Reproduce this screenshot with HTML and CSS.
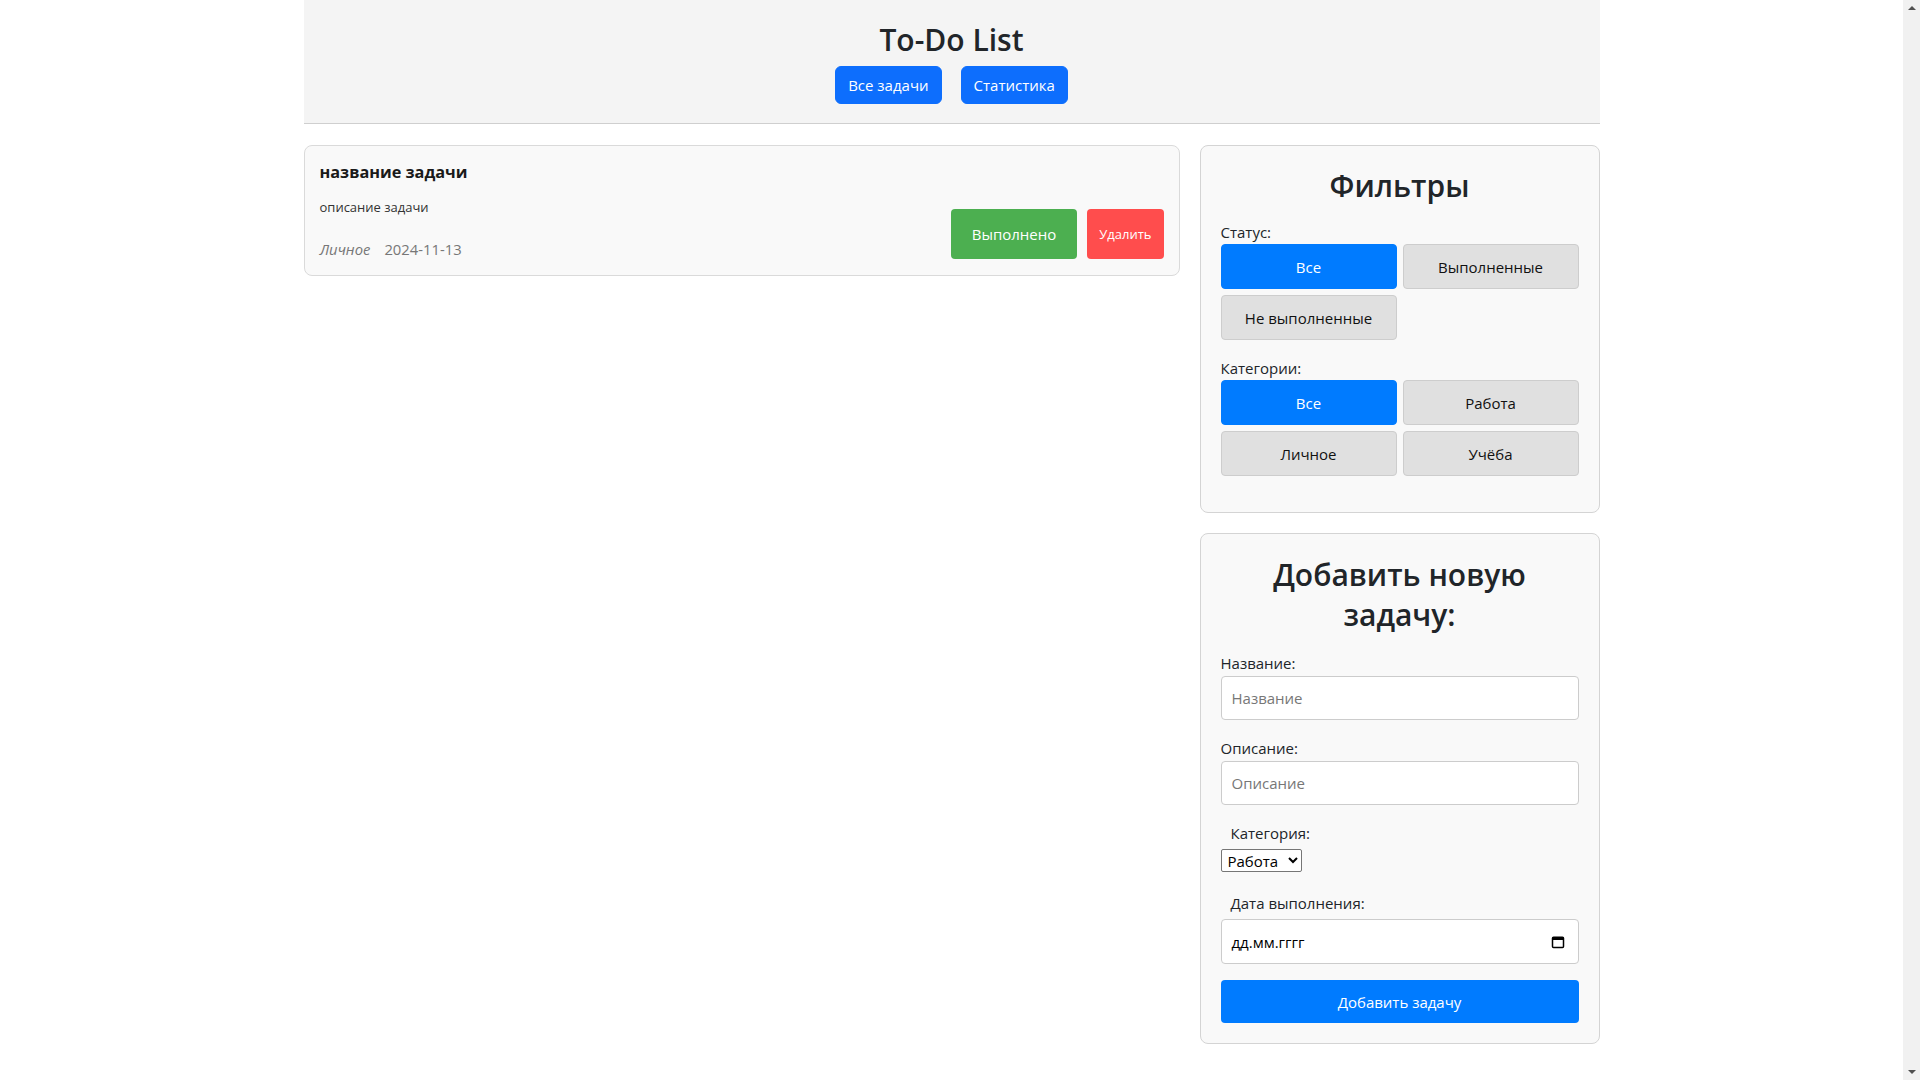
FILE: index.html
```html
<!DOCTYPE html>
<html lang="ru">
<head>
<meta charset="utf-8">
<title>To-Do List</title>
<link rel="stylesheet" href="styles.css">
</head>
<body>
<div class="page">
  <header class="site-header">
    <h1 class="site-title">To-Do List</h1>
    <nav class="nav">
      <button class="nav-btn">Все задачи</button>
      <button class="nav-btn">Статистика</button>
    </nav>
  </header>

  <main class="layout">
    <section class="tasks">
      <article class="task-card">
        <div class="task-info">
          <h3 class="task-title">название задачи</h3>
          <p class="task-desc">описание задачи</p>
          <div class="task-meta">
            <span class="task-cat">Личное</span>
            <span class="task-date">2024-11-13</span>
          </div>
        </div>
        <div class="task-actions">
          <button class="btn-done">Выполнено</button>
          <button class="btn-delete">Удалить</button>
        </div>
      </article>
    </section>

    <aside class="sidebar">
      <div class="panel">
        <h2 class="panel-title">Фильтры</h2>
        <div class="filter-group">
          <div class="filter-label">Статус:</div>
          <div class="filter-grid">
            <button class="filter-btn active">Все</button>
            <button class="filter-btn">Выполненные</button>
            <button class="filter-btn">Не выполненные</button>
          </div>
        </div>
        <div class="filter-group">
          <div class="filter-label">Категории:</div>
          <div class="filter-grid">
            <button class="filter-btn active">Все</button>
            <button class="filter-btn">Работа</button>
            <button class="filter-btn">Личное</button>
            <button class="filter-btn">Учёба</button>
          </div>
        </div>
      </div>

      <form class="panel add-panel">
        <h2 class="panel-title add-title">Добавить новую задачу:</h2>
        <div class="field">
          <label class="field-label">Название:</label>
          <input class="text-input" type="text" placeholder="Название">
        </div>
        <div class="field">
          <label class="field-label">Описание:</label>
          <input class="text-input" type="text" placeholder="Описание">
        </div>
        <div class="field field-select">
          <label class="field-label indented">Категория:</label>
          <select class="select">
            <option>Работа</option>
            <option>Личное</option>
            <option>Учёба</option>
          </select>
        </div>
        <div class="field field-date">
          <label class="field-label indented">Дата выполнения:</label>
          <div class="date-input">
            <span class="date-text">дд.мм.гггг</span>
            <svg class="cal-icon" width="14" height="14" viewBox="0 0 14 14" aria-hidden="true">
              <rect x="1.5" y="2.2" width="11" height="10.3" rx="1" fill="none" stroke="#000" stroke-width="1.5"/>
              <rect x="1.5" y="2.2" width="11" height="2.8" fill="#000"/>
            </svg>
          </div>
        </div>
        <button type="button" class="submit-btn">Добавить задачу</button>
      </form>
    </aside>
  </main>
</div>

<div class="scrollbar" aria-hidden="true">
  <span class="scroll-arrow up"></span>
  <span class="scroll-thumb"></span>
  <span class="scroll-arrow down"></span>
</div>
</body>
</html>
```
FILE: styles.css
```css
html {
  overflow-y: scroll;
}

body {
  margin: 0;
  padding-right: 17px;
  background: #fff;
  color: #212529;
  font-family: "Open Sans", "Noto Sans", sans-serif;
  font-size: 15px;
  line-height: 24px;
}

.page {
  max-width: 1296px;
  margin: 0 auto;
  padding-bottom: 40px;
}

/* Header */
.site-header {
  background: #f4f4f4;
  padding: 21px 0 19px;
  border-bottom: 1px solid #cfcfcf;
  text-align: center;
}

.site-title {
  margin: 0 0 7px;
  font-size: 30px;
  line-height: 38px;
  font-weight: 600;
  color: #212529;
}

.nav {
  display: flex;
  justify-content: center;
  gap: 19px;
}

.nav-btn {
  height: 38px;
  padding: 0 12px;
  border: 1px solid #0d6efd;
  border-radius: 6px;
  background: #0d6efd;
  color: #fff;
  font-family: inherit;
  font-size: 15px;
  line-height: 24px;
}

/* Layout */
.layout {
  display: flex;
  align-items: flex-start;
  gap: 20px;
  padding-top: 21px;
}

.tasks {
  flex: 1;
  min-width: 0;
}

.sidebar {
  width: 400px;
  flex: none;
  display: flex;
  flex-direction: column;
  gap: 20px;
}

/* Task card */
.task-card {
  display: flex;
  justify-content: space-between;
  align-items: flex-end;
  background: #f9f9f9;
  border: 1px solid #dadada;
  border-radius: 8px;
  padding: 15px 15px 16px;
}

.task-title {
  margin: 0 0 15px;
  font-size: 16.3px;
  line-height: 22px;
  font-weight: 700;
  color: #1a1a1a;
}

.task-desc {
  margin: 0;
  font-size: 13px;
  line-height: 18px;
  color: #333;
}

.task-meta {
  margin-top: 23px;
  font-size: 14.8px;
  line-height: 20px;
  color: #777;
  display: flex;
  gap: 14px;
}

.task-cat {
  font-style: italic;
}

.task-actions {
  display: flex;
  gap: 10px;
}

.btn-done,
.btn-delete {
  height: 50px;
  border: none;
  border-radius: 4px;
  color: #fff;
  font-family: inherit;
}

.btn-done {
  padding: 0 21px;
  background: #4caf50;
  font-size: 15px;
}

.btn-delete {
  padding: 0 12px;
  background: #ff4d4d;
  font-size: 13px;
}

/* Panels */
.panel {
  background: #f9f9f9;
  border: 1px solid #d4d4d4;
  border-radius: 8px;
  padding: 20px;
  margin: 0;
}

.panel-title {
  margin: 1px 0 15px;
  text-align: center;
  font-size: 30px;
  line-height: 38px;
  font-weight: 600;
  color: #212529;
}

.filter-group {
  margin-bottom: 16px;
}

.filter-label {
  line-height: 24px;
}

.filter-grid {
  display: grid;
  grid-template-columns: 1fr 1fr;
  gap: 6px;
}

.filter-btn {
  height: 45px;
  border: 1px solid #cdcdcd;
  border-radius: 4px;
  background: #e0e0e0;
  color: #111;
  font-family: inherit;
  font-size: 15px;
}

.filter-btn.active {
  background: #007bff;
  border-color: #007bff;
  color: #fff;
}

/* Add form */
.add-title {
  padding: 0 20px;
  line-height: 40px;
  margin: 1px 0 17px;
}

.field {
  margin-bottom: 17px;
}

.field-label {
  display: block;
  line-height: 22px;
  margin-bottom: 2px;
}

.field-label.indented {
  padding-left: 10px;
  margin-bottom: 5px;
}

.field-select {
  margin-bottom: 20px;
}

.field-date {
  margin-bottom: 16px;
}

.text-input {
  display: block;
  box-sizing: border-box;
  width: 100%;
  height: 44px;
  padding: 0 10px;
  border: 1px solid #cccccc;
  border-radius: 4px;
  background: #fff;
  font-family: inherit;
  font-size: 15px;
  color: #212529;
}

.text-input::placeholder {
  color: #777;
}

.select {
  display: block;
  height: 23px;
  width: 81px;
  padding: 0 0 0 2px;
  border: 1px solid #767676;
  border-radius: 2px;
  background: #fff;
  font-family: inherit;
  font-size: 15px;
  color: #000;
}

.date-input {
  box-sizing: border-box;
  height: 45px;
  display: flex;
  align-items: center;
  justify-content: space-between;
  padding: 0 13px 0 10px;
  border: 1px solid #cccccc;
  border-radius: 4px;
  background: #fff;
  color: #000;
}

.date-text {
  font-size: 15px;
}

.cal-icon {
  display: block;
}

.submit-btn {
  display: block;
  width: 100%;
  height: 43px;
  border: none;
  border-radius: 4px;
  background: #007bff;
  color: #fff;
  font-family: inherit;
  font-size: 15px;
}

/* Simulated browser scrollbar */
.scrollbar {
  position: fixed;
  top: 0;
  right: 0;
  bottom: 0;
  width: 17px;
  background: #f1f1f1;
  display: flex;
  flex-direction: column;
  align-items: center;
}

.scroll-arrow {
  flex: none;
  width: 0;
  height: 0;
  margin: 6px 0;
  border-left: 4px solid transparent;
  border-right: 4px solid transparent;
}

.scroll-arrow.up {
  border-bottom: 4px solid #505050;
}

.scroll-arrow.down {
  border-top: 4px solid #505050;
}

.scroll-thumb {
  flex: 1;
  width: 8px;
  margin: 2px 0;
  background: #f1f1f1;
}
```
